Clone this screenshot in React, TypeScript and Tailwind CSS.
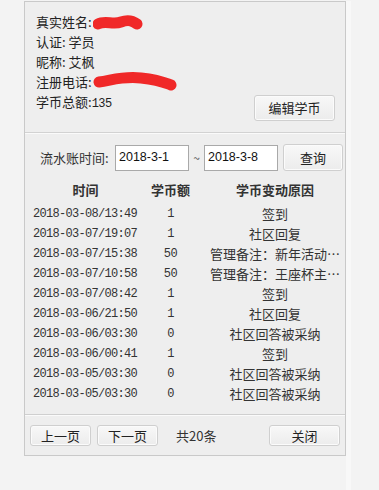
import React from "react";

const rows: [string, string, string][] = [
  ["2018-03-08/13:49", "1", "签到"],
  ["2018-03-07/19:07", "1", "社区回复"],
  ["2018-03-07/15:38", "50", "管理备注：新年活动…"],
  ["2018-03-07/10:58", "50", "管理备注：王座杯主…"],
  ["2018-03-07/08:42", "1", "签到"],
  ["2018-03-06/21:50", "1", "社区回复"],
  ["2018-03-06/03:30", "0", "社区回答被采纳"],
  ["2018-03-06/00:41", "1", "签到"],
  ["2018-03-05/03:30", "0", "社区回答被采纳"],
  ["2018-03-05/03:30", "0", "社区回答被采纳"],
];

const cjk = "font-['Noto_Sans_CJK_SC','Liberation_Sans',sans-serif]";
const mono = "font-['Liberation_Mono','Noto_Sans_CJK_SC',monospace]";

function Btn({ children, className = "" }: { children: React.ReactNode; className?: string }) {
  return (
    <button
      className={`flex items-center justify-center rounded-[3px] border border-[#cfcfcf] bg-gradient-to-b from-[#f8f8f8] to-[#ececec] shadow-[inset_0_0_0_1px_#fbfbfb] text-[13px] text-[#222] ${cjk} ${className}`}
    >
      {children}
    </button>
  );
}

export default function App() {
  return (
    <div className={`w-[379px] h-[490px] bg-[#f3f3f3] pt-px text-[#222] ${cjk} overflow-hidden`}>
      <div className="ml-[24px] w-[327px] h-full border-r-[5px] border-[#f8f8f8]">
        <div className="w-[322px] bg-[#eeeeee] border border-[#c9c9c9]">
          {/* section 1 */}
          <div className="flex justify-between items-end pl-[11px] pr-[10px] pt-[10px] pb-[11px] border-b border-[#d2d2d2]">
            <div className="pb-[7px] text-[13px] leading-[20px]">
              <div className="relative">
                真实姓名:
                <svg className="absolute left-[57px] top-[1px]" width="50" height="20" viewBox="0 0 50 20">
                  <path d="M5 11 C 12 7, 20 12, 28 9 S 40 8, 44 11" stroke="#f02828" strokeWidth="11" fill="none" strokeLinecap="round" />
                </svg>
              </div>
              <div>认证: 学员</div>
              <div>昵称: 艾枫</div>
              <div className="relative">
                注册电话:
                <svg className="absolute left-[57px] top-[-3px]" width="84" height="24" viewBox="0 0 84 24">
                  <path d="M6 13 C 20 11, 30 7, 48 9 S 70 13, 78 16" stroke="#f02828" strokeWidth="11" fill="none" strokeLinecap="round" />
                </svg>
              </div>
              <div>
                学币总额:<span className={`${mono} text-[12px] tracking-[-0.5px]`}>135</span>
              </div>
            </div>
            <Btn className="w-[81px] h-[26px]">编辑学币</Btn>
          </div>

          {/* section 2 */}
          <div className="border-t border-[#fafafa] pt-[10px] pb-[10px] border-b border-b-[#cfcfcf]">
            <div className="flex items-center pl-[15px] h-[27px]">
              <div className="w-[75px] text-[13px] text-[#333]">流水账时间:</div>
              <div className="w-[74px] h-[26px] bg-white border border-[#a9a9a9] pl-[3px] flex items-center text-[12.5px] font-['Liberation_Sans',sans-serif] text-[#111]">
                2018-3-1
              </div>
              <div className="w-[15px] text-center text-[12px] text-[#555]">~</div>
              <div className="w-[74px] h-[26px] bg-white border border-[#a9a9a9] pl-[3px] flex items-center text-[12.5px] font-['Liberation_Sans',sans-serif] text-[#111]">
                2018-3-8
              </div>
              <Btn className="ml-[5px] w-[60px] h-[27px]">查询</Btn>
            </div>

            <div className="mt-[9px] mb-[4px] pl-[8px] grid grid-cols-[105px_65px_141px] h-[20px] items-center text-[13px] font-bold text-[#333]">
              <div className="text-center">时间</div>
              <div className="text-center">学币额</div>
              <div className="text-center pl-[3px]">学币变动原因</div>
            </div>

            {rows.map((r, i) => (
              <div key={i} className="pl-[8px] grid grid-cols-[105px_65px_141px] h-[20px] items-center text-[#333]">
                <div className={`${mono} text-[12px] tracking-[-0.7px] whitespace-nowrap`}>{r[0]}</div>
                <div className={`${mono} text-[12px] tracking-[-0.5px] text-center`}>{r[1]}</div>
                <div className="text-center pl-[3px] text-[13px] whitespace-nowrap">{r[2]}</div>
              </div>
            ))}
          </div>

          {/* footer */}
          <div className="border-t border-[#fafafa] flex items-center pl-[5px] pr-[5px] pt-[9px] pb-[9px]">
            <Btn className="w-[61px] h-[21px]">上一页</Btn>
            <Btn className="ml-[6px] w-[61px] h-[21px]">下一页</Btn>
            <div className="ml-[18px] text-[13px] text-[#333]">共20条</div>
            <Btn className="ml-auto w-[71px] h-[21px]">关闭</Btn>
          </div>
        </div>
      </div>
    </div>
  );
}
